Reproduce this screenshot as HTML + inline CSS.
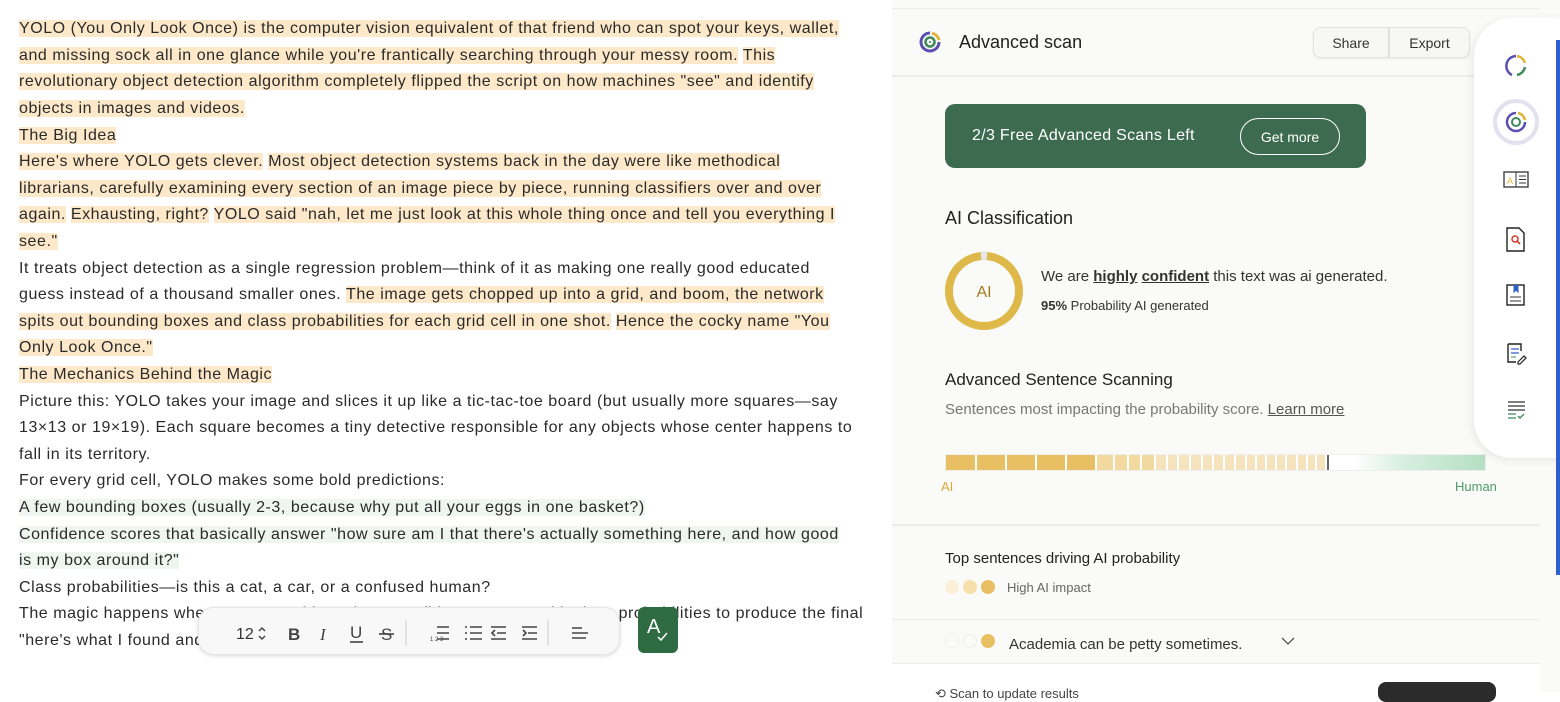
<!DOCTYPE html>
<html><head><meta charset="utf-8"><style>
*{margin:0;padding:0;box-sizing:border-box}
body{width:1560px;height:692px;overflow:hidden;background:#fff;font-family:"Liberation Sans",sans-serif;position:relative;color:#2b2b2b}
#left{position:absolute;left:0;top:0;width:892px;height:692px;background:#fff}
.ln{position:absolute;left:19px;font-size:16px;letter-spacing:0.55px;line-height:23px;white-space:nowrap;color:#2a2a2a}
.o{background:#fde9c9}
.g{background:#eef6ef}
#right{position:absolute;left:892px;top:0;width:668px;height:692px;background:#fafaf8}
.abs{position:absolute}
.hr{position:absolute;left:892px;width:648px;height:2px;background:#ececec}
.btn{position:absolute;top:27px;height:31px;border:1px solid #e2e2e2;background:#f7f7f5;font-size:14px;color:#333;display:flex;align-items:center;justify-content:center;box-shadow:0 1px 2px rgba(0,0,0,.08)}
</style></head><body>
<div id="left">
<div class="ln" style="top:17px"><span class="o">YOLO (You Only Look Once) is the computer vision equivalent of that friend who can spot your keys, wallet,</span></div>
<div class="ln" style="top:44px"><span class="o">and missing sock all in one glance while you're frantically searching through your messy room.</span> <span class="o">This</span></div>
<div class="ln" style="top:70px"><span class="o">revolutionary object detection algorithm completely flipped the script on how machines "see" and identify</span></div>
<div class="ln" style="top:97px"><span class="o">objects in images and videos.</span></div>
<div class="ln" style="top:124px"><span class="o">The Big Idea</span></div>
<div class="ln" style="top:150px"><span class="o">Here's where YOLO gets clever.</span> <span class="o">Most object detection systems back in the day were like methodical</span></div>
<div class="ln" style="top:177px"><span class="o">librarians, carefully examining every section of an image piece by piece, running classifiers over and over</span></div>
<div class="ln" style="top:203px"><span class="o">again.</span> <span class="o">Exhausting, right?</span> <span class="o">YOLO said "nah, let me just look at this whole thing once and tell you everything I</span></div>
<div class="ln" style="top:230px"><span class="o">see."</span></div>
<div class="ln" style="top:257px">It treats object detection as a single regression problem—think of it as making one really good educated</div>
<div class="ln" style="top:283px">guess instead of a thousand smaller ones. <span class="o">The image gets chopped up into a grid, and boom, the network</span></div>
<div class="ln" style="top:310px"><span class="o">spits out bounding boxes and class probabilities for each grid cell in one shot.</span> <span class="o">Hence the cocky name "You</span></div>
<div class="ln" style="top:336px"><span class="o">Only Look Once."</span></div>
<div class="ln" style="top:363px"><span class="o">The Mechanics Behind the Magic</span></div>
<div class="ln" style="top:390px">Picture this: YOLO takes your image and slices it up like a tic-tac-toe board (but usually more squares—say</div>
<div class="ln" style="top:416px">13×13 or 19×19). Each square becomes a tiny detective responsible for any objects whose center happens to</div>
<div class="ln" style="top:443px">fall in its territory.</div>
<div class="ln" style="top:469px">For every grid cell, YOLO makes some bold predictions:</div>
<div class="ln" style="top:496px"><span class="g">A few bounding boxes (usually 2-3, because why put all your eggs in one basket?)</span></div>
<div class="ln" style="top:523px"><span class="g">Confidence scores that basically answer "how sure am I that there's actually something here, and how good</span></div>
<div class="ln" style="top:549px"><span class="g">is my box around it?"</span></div>
<div class="ln" style="top:576px">Class probabilities—is this a cat, a car, or a confused human?</div>
<div class="ln" style="top:602px">The magic happens when YOLO combines these confidence scores with class probabilities to produce the final</div>
<div class="ln" style="top:629px">"here's what I found and where" predictions.</div>
<!-- toolbar -->
<div class="abs" style="left:198px;top:607px;width:422px;height:48px;border-radius:16px;background:#f8f8f8;box-shadow:0 1px 4px rgba(0,0,0,.15);border:1px solid #e6e6e6">
<svg width="422" height="48" style="position:absolute;left:0;top:0" fill="none" stroke="#444" stroke-width="1.6">
<text x="37" y="31" font-size="16" fill="#333" stroke="none" font-family="Liberation Sans">12</text>
<path d="M60 23l3-3 3 3M60 28l3 3 3-3" stroke-width="1.5"/>
<text x="89" y="32" font-size="17" font-weight="bold" fill="#444" stroke="none" font-family="Liberation Sans">B</text>
<text x="121" y="32" font-size="17" font-style="italic" fill="#444" stroke="none" font-family="Liberation Serif">I</text>
<text x="151" y="30" font-size="17" fill="#444" stroke="none" font-family="Liberation Sans">U</text><path d="M151 34h13"/>
<text x="182" y="32" font-size="17" fill="#444" stroke="none" font-family="Liberation Sans">S</text><path d="M180 26h15"/>
<path d="M207 12v26" stroke="#ddd"/>
<path d="M238 19h12M238 25h12M238 31h12"/><text x="231" y="33" font-size="6" fill="#444" stroke="none">1 2 3</text>
<path d="M266 19h2M266 25h2M266 31h2M271 19h12M271 25h12M271 31h12"/>
<path d="M292 19h15M298 25h9M292 31h15M296 22l-3 3 3 3"/>
<path d="M323 19h15M329 25h9M323 31h15M324 22l3 3-3 3"/>
<path d="M349 12v26" stroke="#ddd"/>
<path d="M373 20h10M373 25h16M373 30h14"/>
</svg></div>
<div class="abs" style="left:638px;top:607px;width:40px;height:46px;border-radius:6px;background:#2e6b43;color:#fff;font-size:20px;">
<span style="position:absolute;left:9px;top:9px">A</span>
<svg width="40" height="46" style="position:absolute;left:0;top:0"><path d="M20 30l3 3 6-7" stroke="#fff" stroke-width="1.5" fill="none"/></svg></div>
</div>

<div id="right"></div>
<div class="hr" style="top:8px;height:1px"></div>
<div class="hr" style="top:75px"></div>
<svg class="abs" style="left:918px;top:30px" width="24" height="24" fill="none" stroke-width="3">
<path d="M12 3a9 9 0 1 0 9 9" stroke="#5b4fb0"/><path d="M14 3.2a9 9 0 0 1 7 7" stroke="#e0b53a"/>
<circle cx="12" cy="12" r="4.5" stroke="#3e8a59" stroke-width="2.5"/><circle cx="12" cy="12" r="1" fill="#3e8a59" stroke="none"/></svg>
<div class="abs" style="left:959px;top:32px;font-size:18px;color:#222">Advanced scan</div>
<div class="btn" style="left:1313px;width:76px;border-radius:8px 0 0 8px">Share</div>
<div class="btn" style="left:1389px;width:81px;border-radius:0 8px 8px 0">Export</div>

<div class="abs" style="left:945px;top:104px;width:421px;height:64px;border-radius:10px;background:#3d6b50"></div>
<div class="abs" style="left:972px;top:127px;font-size:16px;color:#fff;letter-spacing:0.3px">2/3 Free Advanced Scans Left</div>
<div class="abs" style="left:1240px;top:118px;width:100px;height:37px;border:1.5px solid #fff;border-radius:19px;color:#fff;font-size:14px;display:flex;align-items:center;justify-content:center">Get more</div>

<div class="abs" style="left:945px;top:208px;font-size:18px;color:#222">AI Classification</div>
<svg class="abs" style="left:944px;top:251px" width="80" height="80"><circle cx="40" cy="40" r="35" fill="none" stroke="#dfb84a" stroke-width="8"/><path d="M37 5a35 35 0 0 1 6 0" stroke="#e6e6e6" stroke-width="9" fill="none"/>
<text x="40" y="46" text-anchor="middle" font-size="16" fill="#a07a1c" font-family="Liberation Sans">AI</text></svg>
<div class="abs" style="left:1041px;top:268px;font-size:15px;color:#333">We are <u><b style="font-weight:600">highly</b></u> <u><b style="font-weight:600">confident</b></u> this text was ai generated.</div>
<div class="abs" style="left:1041px;top:298px;font-size:13px;color:#333"><b>95%</b> Probability AI generated</div>

<div class="abs" style="left:945px;top:370px;font-size:17px;color:#222">Advanced Sentence Scanning</div>
<div class="abs" style="left:945px;top:401px;font-size:15px;color:#777">Sentences most impacting the probability score. <u style="color:#555">Learn more</u></div>
<div class="abs" style="left:945px;top:454px;width:541px;height:17px;display:flex;gap:2px;background:#fff;border:1px solid #eee">
<div style="width:29px;background:#e8bf62"></div><div style="width:28px;background:#e8bf62"></div><div style="width:28px;background:#e8bf62"></div><div style="width:28px;background:#e8bf62"></div><div style="width:28px;background:#e8bf62"></div>
<div style="width:16px;background:#f1d9a0"></div><div style="width:12px;background:#f1d9a0"></div><div style="width:11px;background:#f1d9a0"></div><div style="width:12px;background:#f1d9a0"></div>
<div style="width:10px;background:#f5e3bd"></div><div style="width:9px;background:#f5e3bd"></div><div style="width:10px;background:#f5e3bd"></div><div style="width:10px;background:#f5e3bd"></div><div style="width:9px;background:#f5e3bd"></div><div style="width:9px;background:#f5e3bd"></div><div style="width:9px;background:#f5e3bd"></div><div style="width:9px;background:#f5e3bd"></div><div style="width:8px;background:#f5e3bd"></div><div style="width:8px;background:#f5e3bd"></div><div style="width:8px;background:#f5e3bd"></div><div style="width:8px;background:#f5e3bd"></div><div style="width:9px;background:#f5e3bd"></div><div style="width:8px;background:#f5e3bd"></div><div style="width:7px;background:#f5e3bd"></div><div style="width:8px;background:#f5e3bd"></div>
<div style="width:2px;background:#666"></div>
<div style="flex:1;background:linear-gradient(90deg,#fff 0%,#fff 15%,#d9efe0 45%,#b4dfc2 100%)"></div>
</div>
<div class="abs" style="left:941px;top:479px;font-size:13px;color:#d9a93a">AI</div>
<div class="abs" style="left:1455px;top:479px;font-size:13px;color:#4f9a6a">Human</div>

<div class="hr" style="top:524px"></div>
<div class="abs" style="left:945px;top:550px;font-size:15px;color:#222">Top sentences driving AI probability</div>
<div class="abs" style="left:945px;top:580px;width:14px;height:14px;border-radius:50%;background:#fcefd8"></div>
<div class="abs" style="left:963px;top:580px;width:14px;height:14px;border-radius:50%;background:#f6dfa9"></div>
<div class="abs" style="left:981px;top:580px;width:14px;height:14px;border-radius:50%;background:#e8bf62"></div>
<div class="abs" style="left:1007px;top:580px;font-size:13px;color:#666">High AI impact</div>
<div class="hr" style="top:619px;height:1px"></div>
<div class="abs" style="left:945px;top:634px;width:14px;height:14px;border-radius:50%;border:1px solid #eee"></div>
<div class="abs" style="left:963px;top:634px;width:14px;height:14px;border-radius:50%;border:1px solid #eee"></div>
<div class="abs" style="left:981px;top:634px;width:14px;height:14px;border-radius:50%;background:#e8bf62"></div>
<div class="abs" style="left:1009px;top:636px;font-size:15px;color:#333">Academia can be petty sometimes.</div>
<svg class="abs" style="left:1281px;top:636px" width="14" height="10"><path d="M1 2l6 6 6-6" stroke="#555" fill="none" stroke-width="1.3"/></svg>
<div class="hr" style="top:663px;height:1px"></div>
<div class="abs" style="left:892px;top:664px;width:648px;height:28px;background:#fff"></div>
<div class="abs" style="left:935px;top:686px;font-size:13px;color:#444">⟲ Scan to update results</div>
<div class="abs" style="left:1378px;top:682px;width:118px;height:20px;border-radius:8px;background:#2b2b2b"></div>

<!-- sidebar -->
<div class="abs" style="left:1474px;top:18px;width:90px;height:440px;background:#fff;border-radius:38px 0 0 38px;box-shadow:-2px 2px 8px rgba(0,0,0,.08)"></div>
<div class="abs" style="left:1556px;top:40px;width:4px;height:535px;background:#2f5fcf"></div>
<svg class="abs" style="left:1474px;top:18px" width="82" height="430" fill="none">
<path d="M42 38a10 10 0 0 0-4 19" stroke="#5b4fb0" stroke-width="2.5"/><path d="M43 38a10 10 0 0 1 8 7" stroke="#e0b53a" stroke-width="2.5"/><path d="M51 49a10 10 0 0 1-8 8" stroke="#3e8a59" stroke-width="2.5"/>
<circle cx="42" cy="104" r="21" stroke="#e3e1f0" stroke-width="4" fill="#fff"/>
<path d="M42 95a9 9 0 1 0 9 9" stroke="#5b4fb0" stroke-width="2.5"/><path d="M44 95a9 9 0 0 1 7 7" stroke="#e0b53a" stroke-width="2.5"/><circle cx="42" cy="104" r="4" stroke="#3e8a59" stroke-width="2"/>
<rect x="30" y="154" width="24" height="15" stroke="#333" stroke-width="1.3"/><path d="M42 154v15" stroke="#333"/><text x="33" y="166" font-size="9" fill="#e0b53a" font-family="Liberation Sans">A</text><path d="M45 158h7M45 161.5h7M45 165h7" stroke="#333"/>
<path d="M33 210h12l5 5v18H33z" stroke="#222" stroke-width="1.4"/><circle cx="41" cy="221" r="3" stroke="#d03a2a" stroke-width="1.5"/><path d="M43 223l3 3" stroke="#d03a2a" stroke-width="1.6"/>
<rect x="33" y="267" width="17" height="20" stroke="#222" stroke-width="1.4"/><path d="M40 267v7l2-2 2 2v-7" fill="#2f5fcf" stroke="#2f5fcf"/><path d="M36 279h11M36 283h11" stroke="#333"/>
<path d="M34 326h13v7M34 326v18h8" stroke="#222" stroke-width="1.4"/><path d="M37 331h8M37 335h8" stroke="#2f5fcf" stroke-width="1.3"/><path d="M37 339h5" stroke="#3e8a59"/><path d="M44 344l6-6 2 2-6 6h-2z" stroke="#222" stroke-width="1.2"/>
<path d="M34 384h17M34 388h17M34 392h17" stroke="#333" stroke-width="1.3"/><path d="M34 396h8M34 400h8" stroke="#3e8a59" stroke-width="1.3"/><path d="M44 398l2 2 4-4" stroke="#3e8a59" stroke-width="1.4"/>
</svg>
</body></html>
